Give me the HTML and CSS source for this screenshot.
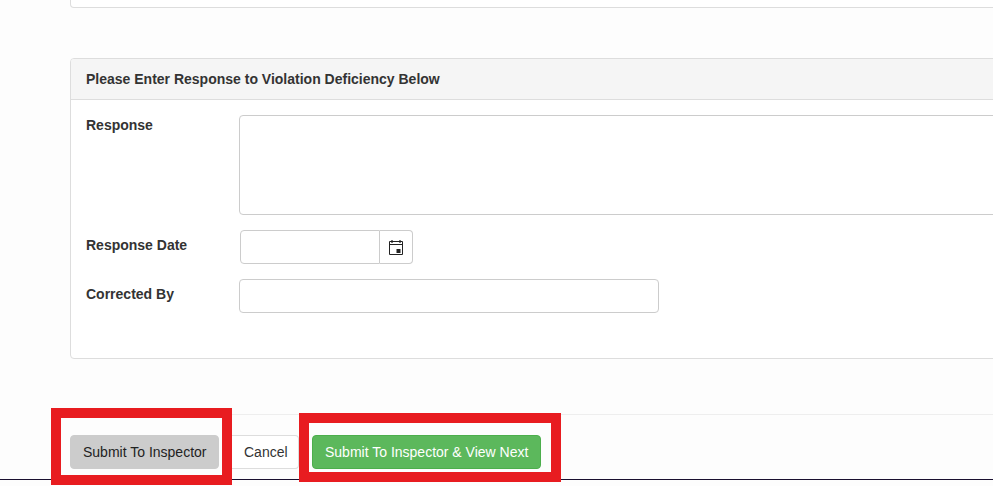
FILE: index.html
```html
<!DOCTYPE html>
<html lang="en">
<head>
<meta charset="utf-8">
<title>Violation Response</title>
<link rel="stylesheet" href="styles.css">
</head>
<body>
<div class="page">
  <div class="content">
    <div class="panel-stub"></div>
    <section class="panel">
      <h2 class="panel-heading">Please Enter Response to Violation Deficiency Below</h2>
      <div class="panel-body">
        <div class="row row-response">
          <label class="label">Response</label>
          <textarea class="control textarea"></textarea>
        </div>
        <div class="row row-date">
          <label class="label">Response Date</label>
          <div class="date-group">
            <input class="date-input" type="text">
            <span class="date-addon">
              <svg width="14" height="15" viewBox="0 0 14 15" aria-hidden="true">
                <path d="M0.5 1.5h13v13h-13z" fill="#fff" stroke="#222" stroke-width="1"/>
                <path d="M0.5 4.5h13" stroke="#222" stroke-width="1"/>
                <path d="M3 0v3M11 0v3" stroke="#222" stroke-width="1.2"/>
                <rect x="7.5" y="9" width="4" height="4" fill="#222"/>
              </svg>
            </span>
          </div>
        </div>
        <div class="row row-corrected">
          <label class="label">Corrected By</label>
          <input class="control input" type="text">
        </div>
      </div>
    </section>
  </div>
  <footer class="footer">
    <button class="btn btn-default" type="button">Submit To Inspector</button>
    <button class="btn btn-cancel" type="button">Cancel</button>
    <button class="btn btn-success" type="button">Submit To Inspector &amp; View Next</button>
  </footer>
  <div class="baseline"></div>
  <div class="mark mark-one"></div>
  <div class="mark mark-two"></div>
</div>
</body>
</html>
```

FILE: styles.css
```css
* { box-sizing: border-box; }
html, body { margin: 0; padding: 0; }
body {
  width: 993px;
  height: 486px;
  overflow: hidden;
  background: #fff;
  font-family: "Liberation Sans", Arial, sans-serif;
  font-size: 14px;
  color: #333;
}
.page {
  position: relative;
  width: 993px;
  height: 486px;
  overflow: hidden;
  background: #fdfdfd;
}
.content {
  height: 414px;
  padding-left: 70px;
}
.panel-stub {
  width: 1000px;
  height: 8px;
  background: #fff;
  border: 1px solid #ddd;
  border-top: 0;
  border-radius: 0 0 4px 4px;
}
.panel {
  width: 1000px;
  height: 301px;
  margin-top: 50px;
  background: #fff;
  border: 1px solid #ddd;
  border-radius: 4px;
}
.panel-heading {
  margin: 0;
  height: 41px;
  padding: 12px 15px 0;
  font-size: 14px;
  line-height: 16px;
  font-weight: 700;
  color: #333;
  background: #f5f5f5;
  border-bottom: 1px solid #ddd;
  border-radius: 3px 3px 0 0;
}
.panel-body { padding: 15px 0 0 15px; }
.row { display: flex; align-items: flex-start; }
.label {
  flex: none;
  width: 153px;
  padding-top: 2px;
  font-weight: 700;
  line-height: 16px;
}
.control, .date-input {
  display: block;
  flex: none;
  background: #fff;
  border: 1px solid #ccc;
  border-radius: 4px;
  outline: none;
  margin: 0;
}
.textarea { width: 900px; height: 100px; resize: none; }
.row-date { margin-top: 15px; }
.row-date .label { padding-top: 7px; }
.date-group { display: flex; flex: none; height: 34px; margin-left: 1px; }
.date-input {
  width: 140px;
  height: 34px;
  border-radius: 4px 0 0 4px;
}
.date-addon {
  display: flex;
  align-items: center;
  justify-content: center;
  width: 33px;
  height: 34px;
  border: 1px solid #ccc;
  border-left: 0;
  border-radius: 0 4px 4px 0;
  background: #fff;
}
.row-corrected { margin-top: 15px; }
.row-corrected .label { padding-top: 7px; }
.input { width: 420px; height: 34px; }
.footer {
  display: flex;
  align-items: flex-start;
  height: 65px;
  margin-left: 70px;
  padding-top: 20px;
  border-top: 1px solid #eeeeee;
}
.btn {
  height: 34px;
  margin: 0;
  padding: 0 12px;
  font-family: inherit;
  font-size: 14px;
  line-height: 20px;
  border: 1px solid transparent;
  border-radius: 4px;
  white-space: nowrap;
}
.btn-default { width: 149px; background: #ccc; border-color: #ccc; color: #222; }
.btn-cancel { width: 68px; margin-left: 12px; background: #fff; border-color: #ddd; border-left-color: transparent; color: #333; border-radius: 0 4px 4px 0; }
.btn-success { width: 229px; margin-left: 13px; background: #5cb85c; border-color: #4cae4c; color: #fff; }
.baseline {
  position: absolute;
  left: 0;
  top: 479px;
  width: 993px;
  height: 1px;
  background: #1a1030;
}
.mark {
  position: absolute;
  border: 10px solid #e81c20;
}
.mark-one { left: 51px; top: 408px; width: 181px; height: 77px; }
.mark-two { left: 299px; top: 413px; width: 262px; height: 69px; }
```
